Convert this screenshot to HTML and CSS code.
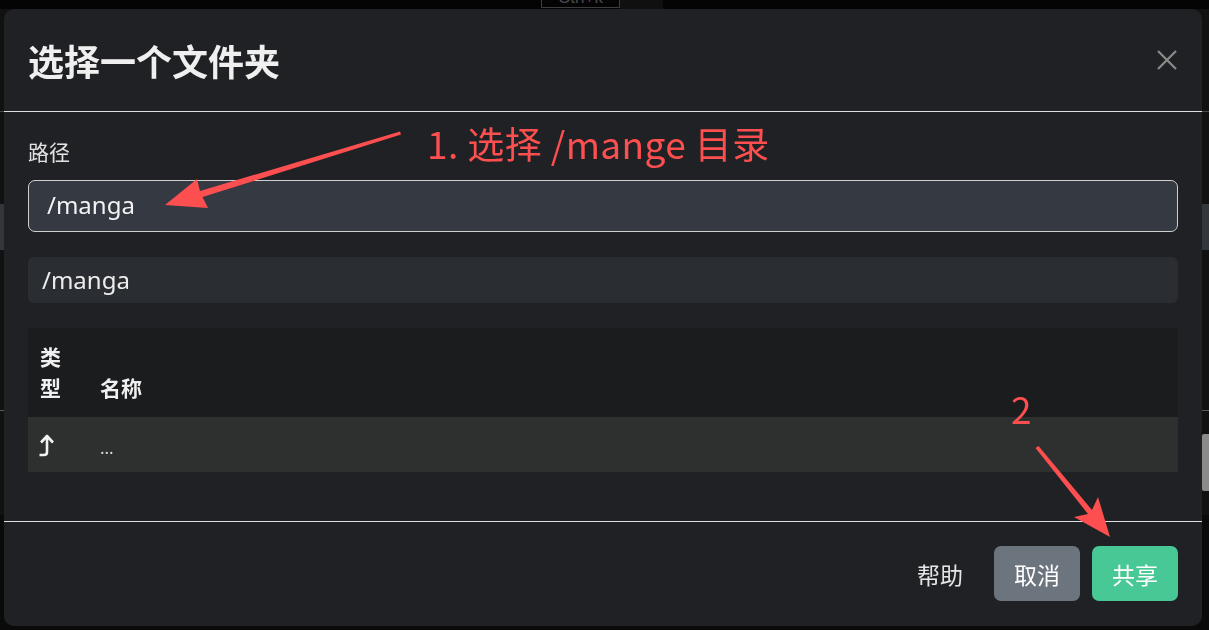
FILE: index.html
```html
<!DOCTYPE html>
<html lang="zh-CN">
<head>
<meta charset="utf-8">
<title>选择一个文件夹</title>
<link rel="stylesheet" href="styles.css">
</head>
<body>
<div class="page">
  <div class="topbar">
    <kbd class="kbd">Ctrl+k</kbd>
    <span class="topblock"></span>
  </div>
  <div class="page-main">
    <div class="pm-a"></div>
    <div class="pm-line"></div>
    <div class="pm-b"></div>
    <div class="pm-block"></div>
    <div class="pm-c"></div>
    <div class="pm-line light"></div>
    <div class="pm-d"><span class="thumb"></span></div>
  </div>
</div>

<div class="modal" role="dialog">
  <div class="modal-header">
    <h2 class="modal-title">选择一个文件夹</h2>
    <button class="close" aria-label="关闭">
      <svg width="20" height="20" viewBox="0 0 20 20"><path d="M1 1L19 19M19 1L1 19" stroke="#8b8b8b" stroke-width="2.2" fill="none"/></svg>
    </button>
  </div>
  <div class="modal-body">
    <label class="label">路径</label>
    <div class="input">/manga</div>
    <div class="path">/manga</div>
    <table class="table">
      <colgroup><col class="c1"><col></colgroup>
      <thead>
        <tr><th>类型</th><th>名称</th></tr>
      </thead>
      <tbody>
        <tr>
          <td>
            <svg class="up" width="17" height="24" viewBox="0 0 17 24"><path d="M3 9.5L9 3L15 9.5M9 3.5V19Q9 22 6 22H1.5" stroke="#f2f2f2" stroke-width="2.6" fill="none" stroke-linejoin="round"/></svg>
          </td>
          <td class="dots">...</td>
        </tr>
      </tbody>
    </table>
  </div>
  <div class="modal-footer">
    <button class="btn btn-link">帮助</button>
    <button class="btn btn-secondary">取消</button>
    <button class="btn btn-success">共享</button>
  </div>
</div>

<div class="annot">
  <svg class="arrows" width="1209" height="630" viewBox="0 0 1209 630">
    <polygon fill="#fd4f4f" points="400,131.5 200,191 197,179 165,205 208,208 202.5,197 401,134.5"/>
    <polygon fill="#fd4f4f" points="1035.5,448 1088,514 1074,517 1110,537 1098,497 1092,510 1038.5,446"/>
  </svg>
  <div class="note note1">1. 选择 /mange 目录</div>
  <div class="note note2">2</div>
</div>
</body>
</html>
```

FILE: styles.css
```css
* { box-sizing: border-box; }
html, body { margin: 0; padding: 0; }
body {
  width: 1209px;
  height: 630px;
  overflow: hidden;
  background: #0a0a0a;
  font-family: "Noto Sans", "Noto Sans CJK SC", sans-serif;
  color: #e9e9e9;
}

/* background page, dimmed behind the dialog */
.page { width: 1209px; }
.topbar {
  height: 9px;
  background: #040404;
  overflow: hidden;
  display: flex;
}
.kbd {
  margin-left: 541px;
  margin-top: -13px;
  width: 79px;
  height: 21px;
  border: 1px solid #3d3d3d;
  color: #4a4a4a;
  font-family: "Liberation Sans", sans-serif;
  font-size: 17px;
  line-height: 19px;
  text-align: center;
}
.topblock {
  width: 43px;
  height: 9px;
  background: #101010;
}
.page-main {
  background: #111111;
  height: 506px;
}
.pm-a { height: 102px; }
.pm-line { height: 1px; background: #4a4a4a; }
.pm-line.light { background: #5a5a5a; }
.pm-b { height: 92px; }
.pm-block { height: 46px; background: #33373c; }
.pm-c { height: 160px; }
.pm-d {
  height: 103px;
  display: flex;
  justify-content: flex-end;
  align-items: flex-start;
}
.thumb {
  width: 7px;
  height: 57px;
  margin-top: 23px;
  background: #8a8a8a;
  border-radius: 2px 0 0 2px;
}

/* dialog */
.modal {
  position: fixed;
  left: 4px;
  top: 9px;
  width: 1198px;
  height: 617px;
  background: #202124;
  border-radius: 10px;
  display: flex;
  flex-direction: column;
  overflow: hidden;
}
.modal-header {
  height: 103px;
  border-bottom: 1px solid #dedede;
  display: flex;
  align-items: center;
  justify-content: space-between;
  padding: 0 25px 0 24px;
  flex: none;
}
.modal-title {
  margin: 0;
  font-family: "Noto Sans CJK SC", sans-serif;
  font-size: 36px;
  font-weight: 700;
  color: #efefef;
  line-height: 40px;
  padding-bottom: 1px;
}
.close {
  background: none;
  border: 0;
  padding: 0;
  width: 20px;
  height: 20px;
  display: flex;
}

.modal-body {
  flex: 1;
  padding: 24px 24px 0;
}
.label {
  display: block;
  font-family: "Noto Sans CJK SC", sans-serif;
  font-size: 21px;
  line-height: 30px;
  color: #e2e2e2;
  margin-bottom: 14px;
}
.input {
  height: 52px;
  border: 1px solid #cfcfcf;
  border-radius: 7px;
  background: #343942;
  color: #f3f3f3;
  font-size: 24px;
  line-height: 48px;
  padding: 0 18px;
  margin-bottom: 25px;
}
.path {
  height: 46px;
  border-radius: 6px;
  background: #2a2d32;
  color: #ededed;
  font-size: 24px;
  line-height: 45px;
  padding: 0 14px;
  margin-bottom: 25px;
}
.table {
  width: 100%;
  border-collapse: collapse;
  table-layout: fixed;
}
.table col.c1 { width: 60px; }
.table thead tr { background: #1b1c1e; }
.table th {
  font-family: "Noto Sans CJK SC", sans-serif;
  font-size: 21px;
  font-weight: 700;
  line-height: 31px;
  color: #f0f0f0;
  text-align: left;
  vertical-align: bottom;
  padding: 13px 12px 14px;
}
.table tbody tr { background: #2e302f; }
.table td {
  height: 55px;
  padding: 0 12px;
  vertical-align: middle;
}
.up { display: block; margin-left: -2px; }
.dots {
  font-size: 17px;
  color: #dcdcdc;
  padding-top: 6px !important;
}

.modal-footer {
  flex: none;
  height: 105px;
  border-top: 1px solid #dedede;
  display: flex;
  justify-content: flex-end;
  align-items: center;
  gap: 12px;
  padding: 0 24px 1px;
}
.btn {
  height: 55px;
  border: 0;
  border-radius: 7px;
  padding: 0 20px;
  font-family: "Noto Sans CJK SC", sans-serif;
  font-size: 23px;
  color: #ffffff;
  background: none;
}
.btn-link { color: #e6e6e6; padding: 0 19px; }
.btn-secondary { background: #6c757d; }
.btn-success { background: #48c894; }

/* screenshot annotations */
.annot {
  position: absolute;
  left: 0;
  top: 0;
  width: 1209px;
  height: 630px;
  pointer-events: none;
}
.arrows { position: absolute; left: 0; top: 0; }
.note {
  position: absolute;
  font-family: "Noto Sans CJK SC", sans-serif;
  font-size: 37px;
  line-height: 37px;
  color: #fd4f4f;
  white-space: nowrap;
}
.note1 { left: 427px; top: 125px; letter-spacing: 0.4px; }
.note2 { left: 1011px; top: 390px; }
```
